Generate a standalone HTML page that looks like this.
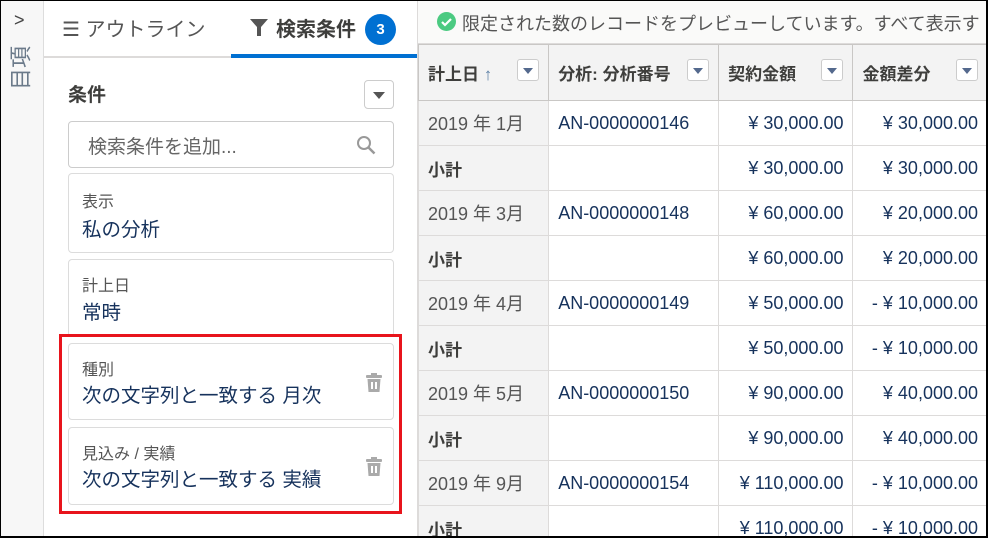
<!DOCTYPE html><html><head><meta charset="utf-8"><style>
*{box-sizing:border-box;margin:0;padding:0}
html,body{width:988px;height:538px;overflow:hidden}
body{background:#fff;font-family:"Liberation Sans","Noto Sans CJK JP",sans-serif;position:relative}
.frame{position:absolute;left:0;top:0;width:988px;height:538px;border:2px solid #000;border-left-width:1px;border-top-width:1px;pointer-events:none;z-index:10}
.abs{position:absolute}
.strip{left:0;top:0;width:44px;height:538px;background:#f7f7f7;border-right:1px solid #ddd}
.card{position:absolute;left:68px;width:326px;border:1px solid #dcdcdc;border-radius:4px;background:#fff}
.card .l{position:absolute;left:13px;font-size:16px;color:#555}
.card .v{position:absolute;left:13px;font-size:19.5px;color:#16325c;white-space:nowrap}
.trash{position:absolute;right:11px;width:16px;height:19px}
.tw{position:absolute;left:418px;top:44px;width:570px;height:494px;overflow:hidden}
table{border-collapse:collapse;table-layout:fixed}
td{border:1px solid #dddbda;height:45px;font-size:18px;color:#16325c;padding:0 9px;white-space:nowrap;overflow:hidden}
tr.h td{height:56px;background:#f3f3f3;font-weight:bold;color:#3e3e3c;border-color:#c9c7c5;font-size:17px}
td.d{background:#f3f3f3;color:#555}
td.r{text-align:right}
.sub td{font-weight:normal}
.sub td.d{font-weight:bold;color:#3e3e3c;font-size:17px}
.dd{display:inline-block;width:22px;height:22px;border:1px solid #ccc;border-radius:3px;background:#fff;vertical-align:middle;position:relative;float:right;margin-top:-1px}
.dd:after{content:"";position:absolute;left:5px;top:8px;border-left:5px solid transparent;border-right:5px solid transparent;border-top:6px solid #54698d}
</style></head><body>
<div class="abs strip"></div>
<div class="abs" style="left:14px;top:10px;font-size:18px;color:#444">&gt;</div>
<div class="abs" style="left:8px;top:42px;width:24px;height:50px;font-size:22px;line-height:24px;color:#6b7a8a;writing-mode:vertical-rl;transform:rotate(180deg)"><span style="display:inline-block;transform:rotate(90deg)">目</span><span style="display:inline-block;transform:rotate(90deg)">項</span></div>

<div class="abs" style="left:44px;top:56px;width:374px;height:2px;background:#dddbda"></div>
<div class="abs" style="left:231px;top:54px;width:187px;height:4px;background:#0070d2"></div>
<div class="abs" style="left:62px;top:13px;font-size:20px;color:#555">☰ アウトライン</div>
<svg class="abs" style="left:250px;top:19px" width="18" height="17" viewBox="0 0 18 17"><path d="M0 0h18l-7 8v9h-4v-9z" fill="#555"/></svg>
<div class="abs" style="left:276px;top:13px;font-size:20px;font-weight:bold;color:#3e3e3c">検索条件</div>
<div class="abs" style="left:365px;top:14px;width:31px;height:31px;border-radius:50%;background:#0070d2;color:#fff;font-weight:bold;font-size:15px;text-align:center;line-height:31px">3</div>
<div class="abs" style="left:417px;top:0;width:1px;height:538px;background:#dddbda"></div>

<div class="abs" style="left:68px;top:80px;font-size:19px;font-weight:bold;color:#3e3e3c">条件</div>
<div class="abs" style="left:364px;top:80px;width:30px;height:29px;border:1px solid #ccc;border-radius:4px"><div style="position:absolute;left:8px;top:11px;border-left:6px solid transparent;border-right:6px solid transparent;border-top:7px solid #555"></div></div>
<div class="abs" style="left:68px;top:121px;width:326px;height:47px;border:1px solid #ccc;border-radius:4px"><span style="position:absolute;left:19px;top:10px;font-size:19px;color:#666">検索条件を追加...</span>
<svg style="position:absolute;right:17px;top:13px" width="20" height="20" viewBox="0 0 20 20"><circle cx="8" cy="8" r="6" fill="none" stroke="#999" stroke-width="2"/><path d="M12.5 12.5l6 6" stroke="#999" stroke-width="2.5"/></svg></div>

<div class="card" style="top:173px;height:80px"><span class="l" style="top:14px">表示</span><span class="v" style="top:39px">私の分析</span></div>
<div class="card" style="top:259px;height:78px"><span class="l" style="top:12px">計上日</span><span class="v" style="top:36px">常時</span></div>
<div class="card" style="top:343px;height:77px"><span class="l" style="top:12px">種別</span><span class="v" style="top:35px">次の文字列と一致する 月次</span>
<svg class="trash" style="top:29px" viewBox="0 0 16 19"><rect x="5" y="0" width="6" height="3" fill="#aaa"/><rect x="0" y="2" width="16" height="3" rx="1" fill="#aaa"/><path d="M1.5 6h13l-1 13h-11z" fill="#aaa"/><rect x="5" y="9" width="2" height="7" fill="#fff"/><rect x="9" y="9" width="2" height="7" fill="#fff"/></svg></div>
<div class="card" style="top:427px;height:78px"><span class="l" style="top:12px">見込み / 実績</span><span class="v" style="top:35px">次の文字列と一致する 実績</span>
<svg class="trash" style="top:29px" viewBox="0 0 16 19"><rect x="5" y="0" width="6" height="3" fill="#aaa"/><rect x="0" y="2" width="16" height="3" rx="1" fill="#aaa"/><path d="M1.5 6h13l-1 13h-11z" fill="#aaa"/><rect x="5" y="9" width="2" height="7" fill="#fff"/><rect x="9" y="9" width="2" height="7" fill="#fff"/></svg></div>
<div class="abs" style="left:59px;top:334px;width:343px;height:180px;border:3px solid #e8141c"></div>

<div class="abs" style="left:418px;top:0;width:570px;height:44px;background:#fafaf9;border-bottom:1px solid #dddbda"></div>
<svg class="abs" style="left:437px;top:12px" width="19" height="19" viewBox="0 0 19 19"><circle cx="9.5" cy="9.5" r="9.5" fill="#4bca81"/><path d="M5 10l3 3 6-6" stroke="#fff" stroke-width="2.2" fill="none"/></svg>
<div class="abs" style="left:462px;top:10px;font-size:18px;color:#555;white-space:nowrap">限定された数のレコードをプレビューしています。すべて表示す</div>

<div class="tw"><table>
<colgroup><col style="width:131px"><col style="width:171px"><col style="width:135px"><col style="width:135px"></colgroup>
<tr class="h"><td>計上日 <span style="color:#5b7fa6">↑</span><span class="dd"></span></td><td>分析: 分析番号<span class="dd"></span></td><td>契約金額<span class="dd"></span></td><td>金額差分<span class="dd"></span></td></tr>
<tr><td class="d">2019 年 1月</td><td>AN-0000000146</td><td class="r">¥ 30,000.00</td><td class="r">¥ 30,000.00</td></tr>
<tr class="sub"><td class="d">小計</td><td></td><td class="r">¥ 30,000.00</td><td class="r">¥ 30,000.00</td></tr>
<tr><td class="d">2019 年 3月</td><td>AN-0000000148</td><td class="r">¥ 60,000.00</td><td class="r">¥ 20,000.00</td></tr>
<tr class="sub"><td class="d">小計</td><td></td><td class="r">¥ 60,000.00</td><td class="r">¥ 20,000.00</td></tr>
<tr><td class="d">2019 年 4月</td><td>AN-0000000149</td><td class="r">¥ 50,000.00</td><td class="r">- ¥ 10,000.00</td></tr>
<tr class="sub"><td class="d">小計</td><td></td><td class="r">¥ 50,000.00</td><td class="r">- ¥ 10,000.00</td></tr>
<tr><td class="d">2019 年 5月</td><td>AN-0000000150</td><td class="r">¥ 90,000.00</td><td class="r">¥ 40,000.00</td></tr>
<tr class="sub"><td class="d">小計</td><td></td><td class="r">¥ 90,000.00</td><td class="r">¥ 40,000.00</td></tr>
<tr><td class="d">2019 年 9月</td><td>AN-0000000154</td><td class="r">¥ 110,000.00</td><td class="r">- ¥ 10,000.00</td></tr>
<tr class="sub"><td class="d">小計</td><td></td><td class="r">¥ 110,000.00</td><td class="r">- ¥ 10,000.00</td></tr>
</table></div>
<div class="frame"></div>
</body></html>
